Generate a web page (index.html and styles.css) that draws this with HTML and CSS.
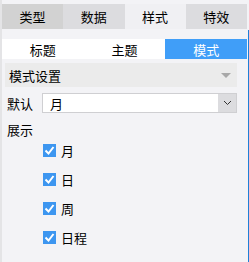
FILE: index.html
```html
<!DOCTYPE html>
<html lang="zh-CN">
<head>
    <meta charset="UTF-8">
    <title>样式</title>
    <link rel="stylesheet" href="styles.css">
</head>
<body>
    <div class="panel">
        <div class="tabs">
            <div class="tab tab-first">类型</div>
            <div class="tab">数据</div>
            <div class="tab active">样式</div>
            <div class="tab">特效</div>
        </div>

        <div class="subtabs">
            <div class="subtab">标题</div>
            <div class="subtab">主题</div>
            <div class="subtab active">模式</div>
        </div>

        <div class="content">
            <div class="section-head">
                <span>模式设置</span>
                <span class="caret"></span>
            </div>

            <div class="field">
                <span class="field-label">默认</span>
                <div class="select">
                    <span class="select-value">月</span>
                    <span class="select-btn">
                        <svg width="9" height="6" viewBox="0 0 9 6"><path d="M1 1 L4.5 4.5 L8 1" fill="none" stroke="#333" stroke-width="1"/></svg>
                    </span>
                </div>
            </div>

            <div class="group-label">展示</div>

            <ul class="checks">
                <li><span class="box"><svg width="13" height="13" viewBox="0 0 13 13"><path d="M2.5 6.5 L5.5 9.5 L10.5 3" fill="none" stroke="#fff" stroke-width="2"/></svg></span>月</li>
                <li><span class="box"><svg width="13" height="13" viewBox="0 0 13 13"><path d="M2.5 6.5 L5.5 9.5 L10.5 3" fill="none" stroke="#fff" stroke-width="2"/></svg></span>日</li>
                <li><span class="box"><svg width="13" height="13" viewBox="0 0 13 13"><path d="M2.5 6.5 L5.5 9.5 L10.5 3" fill="none" stroke="#fff" stroke-width="2"/></svg></span>周</li>
                <li><span class="box"><svg width="13" height="13" viewBox="0 0 13 13"><path d="M2.5 6.5 L5.5 9.5 L10.5 3" fill="none" stroke="#fff" stroke-width="2"/></svg></span>日程</li>
            </ul>
        </div>
    </div>
</body>
</html>
```

FILE: styles.css
```css
body {
    margin: 0;
    background-color: #f3f3f6;
    font-family: "Noto Sans CJK SC", sans-serif;
    font-size: 13px;
    color: #000;
}

.panel {
    position: relative;
    height: 262px;
    box-sizing: border-box;
    border-left: 2px solid #e4e4e6;
    padding: 4px 2px 0 0;
}

/* blue edge on the right */
.panel:after {
    content: "";
    position: absolute;
    top: 30px;
    right: 0;
    bottom: 0;
    width: 1px;
    background-color: #1f7fd8;
}

.tabs {
    display: flex;
    height: 25px;
}

.tab {
    flex: 1;
    display: flex;
    align-items: center;
    justify-content: center;
    background-color: #dcdcdf;
}

.tab-first {
    background-color: #d2d2d2;
}

.tab.active {
    background-color: #f0f0f3;
}

.subtabs {
    display: flex;
    height: 20px;
    margin-top: 10px;
    background-color: #fff;
}

.subtab {
    flex: 1;
    display: flex;
    align-items: center;
    justify-content: center;
}

.subtab.active {
    background-color: #409ef8;
    color: #fff;
}

.content {
    padding: 4px 10px 0 3px;
}

.section-head {
    display: flex;
    align-items: center;
    justify-content: space-between;
    height: 24px;
    padding: 0 6px 0 4px;
    background-color: #ebebeb;
}

.caret {
    width: 0;
    height: 0;
    border-left: 5px solid transparent;
    border-right: 5px solid transparent;
    border-top: 5px solid #a8a8a8;
}

.field {
    display: flex;
    align-items: center;
    margin-top: 6px;
    height: 20px;
}

.field-label {
    width: 35px;
    padding-left: 2px;
}

.select {
    flex: 1;
    display: flex;
    height: 20px;
    box-sizing: border-box;
    border: 1px solid #cfcfd2;
    background-color: #fff;
}

.select-value {
    flex: 1;
    display: flex;
    align-items: center;
    padding-left: 7px;
}

.select-btn {
    width: 18px;
    display: flex;
    align-items: center;
    justify-content: center;
    background-color: #dcdcdf;
}

.group-label {
    margin-top: 8px;
    padding-left: 2px;
    line-height: 18px;
}

.checks {
    list-style: none;
    margin: -3px 0 0;
    padding: 0 0 0 38px;
}

.checks li {
    display: flex;
    align-items: center;
    height: 29px;
    line-height: 13px;
}

.box {
    width: 13px;
    height: 13px;
    margin-right: 5px;
    background-color: #3d96f0;
    display: flex;
}
```
